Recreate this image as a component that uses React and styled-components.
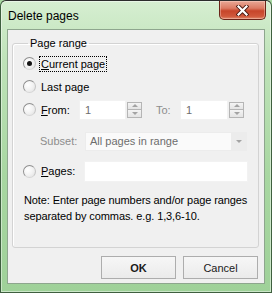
import React from "react";
import styled, { createGlobalStyle } from "styled-components";

const GlobalStyle = createGlobalStyle`
  html, body {
    margin: 0;
    padding: 0;
    background: #a9d8a3;
  }
  body {
    font-family: "Liberation Sans", Arial, sans-serif;
    font-size: 11px;
    color: #000;
  }
`;

const Window = styled.div`
  box-sizing: border-box;
  width: 272px;
  height: 293px;
  display: flex;
  flex-direction: column;
  border: 1px solid #3f5f3f;
  border-top-color: #2c2c2c;
  border-radius: 6px 6px 0 0;
  background: linear-gradient(to bottom, #d6eed1 0%, #bfe3b9 20%, #a8d7a1 60%, #9fd199 100%);
  box-shadow: inset 0 0 0 1px rgba(255, 255, 255, 0.45);
`;

const TitleBar = styled.div`
  height: 28px;
  display: flex;
  align-items: flex-start;
  justify-content: space-between;
  padding: 0 5px 0 7px;
`;

const Title = styled.div`
  font-size: 12px;
  margin-top: 8px;
  color: #000;
`;

const CloseButton = styled.div`
  width: 47px;
  height: 19px;
  box-sizing: border-box;
  border: 1px solid #6a2418;
  border-top: none;
  border-radius: 0 0 5px 5px;
  background: linear-gradient(to bottom, #e9a896 0%, #dc7b64 40%, #c7452a 55%, #d0583b 85%, #e08a6c 100%);
  box-shadow: inset 0 0 0 1px rgba(255, 220, 210, 0.4);
  display: flex;
  align-items: center;
  justify-content: center;
`;

const Client = styled.div`
  flex: 1;
  margin: 0 6px 8px 6px;
  border: 1px solid #8ea68e;
  background: #f0f0f0;
  display: flex;
  flex-direction: column;
  padding: 0 5px 4px 4px;
`;

const GroupBox = styled.fieldset`
  margin: 7px 0 0 0;
  padding: 0 0 0 10px;
  border: 1px solid #d3d3d3;
  border-radius: 3px;
  box-shadow: inset 1px 1px 0 #fff;
  height: 211px;
  box-sizing: border-box;
  min-width: 0;
`;

const Legend = styled.legend`
  padding: 0 2px;
  margin-left: 5px;
  line-height: 13px;
`;

const Row = styled.div`
  display: flex;
  align-items: center;
  height: ${(p) => p.$h || 23}px;
  margin-top: ${(p) => p.$mt || 0}px;
`;

const Radio = styled.span`
  width: 13px;
  height: 13px;
  box-sizing: border-box;
  border-radius: 50%;
  border: 1px solid #8f8f8f;
  border-right-color: #c4c4c4;
  border-bottom-color: #d6d6d6;
  background: radial-gradient(circle at 35% 35%, #fff 0%, #f2f2f2 50%, #dedede 100%);
  display: flex;
  align-items: center;
  justify-content: center;
  flex-shrink: 0;
  &::after {
    content: "";
    width: 5px;
    height: 5px;
    border-radius: 50%;
    background: ${(p) => (p.$checked ? "#151515" : "transparent")};
  }
`;

const Label = styled.span`
  margin-left: 3px;
  padding: 1px 1px;
  border: 1px dotted ${(p) => (p.$focus ? "#000" : "transparent")};
  color: ${(p) => (p.$disabled ? "#8d8d8d" : "#000")};
  width: ${(p) => (p.$w ? `${p.$w}px` : "auto")};
  flex-shrink: 0;
  box-sizing: border-box;
`;

const PlainLabel = styled.span`
  color: ${(p) => (p.$disabled ? "#8d8d8d" : "#000")};
  width: ${(p) => (p.$w ? `${p.$w}px` : "auto")};
  margin-left: ${(p) => p.$ml || 0}px;
  flex-shrink: 0;
`;

const U = styled.span`
  text-decoration: underline;
`;

const Field = styled.div`
  box-sizing: border-box;
  width: ${(p) => p.$w}px;
  height: ${(p) => p.$h || 20}px;
  background: #fff;
  border: 1px solid #f2f2f2;
  display: flex;
  align-items: center;
  padding-left: 5px;
  color: ${(p) => (p.$disabled ? "#6d6d6d" : "#000")};
`;

const Spinner = styled.div`
  width: 15px;
  height: 16px;
  margin-left: 1px;
  display: flex;
  flex-direction: column;
`;

const SpinHalf = styled.div`
  flex: 1;
  box-sizing: border-box;
  border: 1px solid #b5b5b5;
  background: linear-gradient(to bottom, #f4f4f4, #e4e4e4);
  display: flex;
  align-items: center;
  justify-content: center;
  & + & {
    border-top: none;
  }
`;

const Triangle = styled.span`
  width: 0;
  height: 0;
  border-left: 3px solid transparent;
  border-right: 3px solid transparent;
  ${(p) =>
    p.$down
      ? "border-top: 3px solid #a3a3a3;"
      : "border-bottom: 3px solid #a3a3a3;"}
`;

const Select = styled.div`
  box-sizing: border-box;
  width: 162px;
  height: 19px;
  background: #fafafa;
  border: 1px solid #ececec;
  display: flex;
  align-items: stretch;
  color: #6d6d6d;
`;

const SelectText = styled.div`
  flex: 1;
  display: flex;
  align-items: center;
  padding-left: 4px;
`;

const SelectArrow = styled.div`
  width: 15px;
  background: #ececec;
  display: flex;
  align-items: center;
  justify-content: center;
`;

const Note = styled.div`
  margin-top: 10px;
  line-height: 16px;
  padding-left: 1px;
  padding-right: 0;
  margin-right: -2px;
  letter-spacing: -0.1px;
`;

const ButtonRow = styled.div`
  display: flex;
  justify-content: flex-end;
  gap: 7px;
  margin-top: auto;
  padding-right: 1px;
`;

const Button = styled.div`
  box-sizing: border-box;
  width: 75px;
  height: 23px;
  border: 1px solid #adadad;
  background: linear-gradient(to bottom, #f6f6f6, #ebebeb);
  display: flex;
  align-items: center;
  justify-content: center;
  font-weight: ${(p) => (p.$primary ? "bold" : "normal")};
  color: #1a1a1a;
`;

const Spin = () => (
  <Spinner>
    <SpinHalf>
      <Triangle />
    </SpinHalf>
    <SpinHalf>
      <Triangle $down />
    </SpinHalf>
  </Spinner>
);

const CloseGlyph = () => (
  <svg width="13" height="11" viewBox="0 0 13 11">
    <path
      d="M2.5 1.5 L10.5 9.5 M10.5 1.5 L2.5 9.5"
      stroke="#4a1a12"
      strokeWidth="4"
      strokeLinecap="square"
    />
    <path
      d="M2.5 1.5 L10.5 9.5 M10.5 1.5 L2.5 9.5"
      stroke="#fff"
      strokeWidth="2.2"
      strokeLinecap="square"
    />
  </svg>
);

export default function App() {
  return (
    <>
      <GlobalStyle />
      <Window>
        <TitleBar>
          <Title>Delete pages</Title>
          <CloseButton>
            <CloseGlyph />
          </CloseButton>
        </TitleBar>
        <Client>
          <GroupBox>
            <Legend>Page range</Legend>
            <Row $mt={2}>
              <Radio $checked />
              <Label $focus>
                <U>C</U>urrent page
              </Label>
            </Row>
            <Row>
              <Radio />
              <Label>Last page</Label>
            </Row>
            <Row>
              <Radio />
              <Label $w={40}>
                <U>F</U>rom:
              </Label>
              <Field $w={47} $disabled>
                1
              </Field>
              <Spin />
              <PlainLabel $disabled $ml={14} $w={24}>
                To:
              </PlainLabel>
              <Field $w={48} $disabled>
                1
              </Field>
              <Spin />
            </Row>
            <Row $mt={9} $h={22}>
              <PlainLabel $disabled $ml={17} $w={45}>
                Subset:
              </PlainLabel>
              <Select>
                <SelectText>All pages in range</SelectText>
                <SelectArrow>
                  <Triangle $down />
                </SelectArrow>
              </Select>
            </Row>
            <Row $mt={8} $h={22}>
              <Radio />
              <Label $w={45}>
                <U>P</U>ages:
              </Label>
              <Field $w={164} $h={21} />
            </Row>
            <Note>
              Note: Enter page numbers and/or page ranges separated by commas.
              e.g. 1,3,6-10.
            </Note>
          </GroupBox>
          <ButtonRow>
            <Button $primary>OK</Button>
            <Button>Cancel</Button>
          </ButtonRow>
        </Client>
      </Window>
    </>
  );
}
